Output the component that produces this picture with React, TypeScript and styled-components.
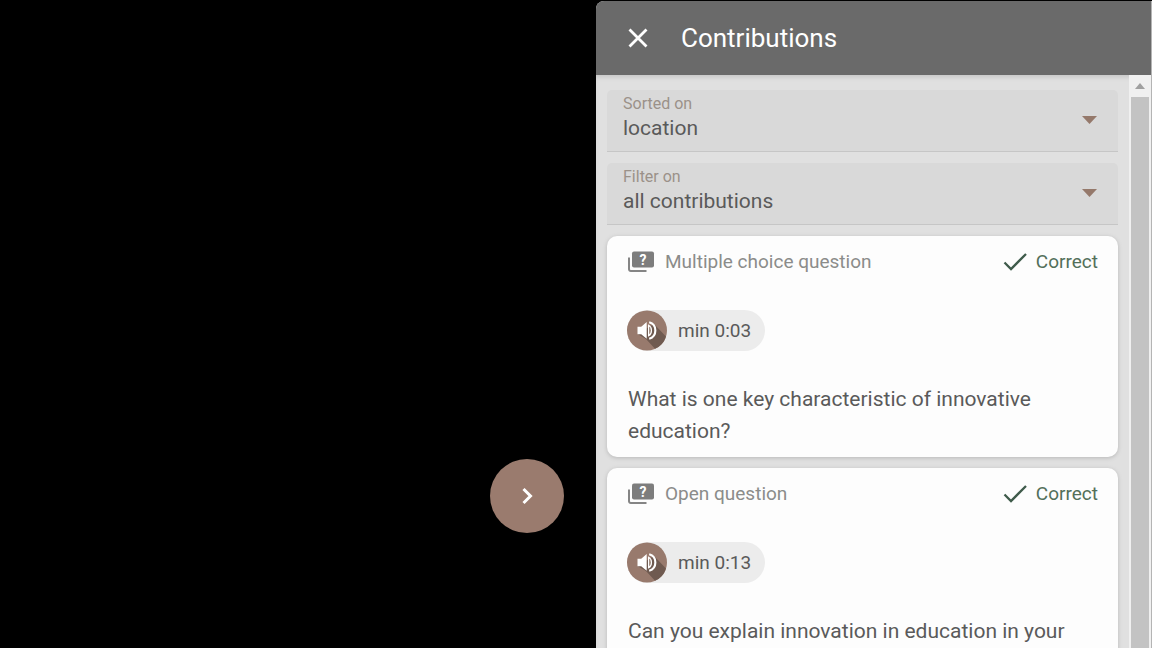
import React, { useId, useState } from "react";
import styled, { createGlobalStyle } from "styled-components";

const GlobalStyle = createGlobalStyle`
  *, *::before, *::after { box-sizing: border-box; }
  body {
    margin: 0;
    background: #000;
    font-family: Roboto, "Liberation Sans", sans-serif;
    color: #5a5a5a;
  }
  button, select { font: inherit; color: inherit; }
`;

const Page = styled.div`
  display: grid;
  grid-template-columns: minmax(0, 149fr) minmax(0, 139fr);
  height: 100vh;
  overflow: hidden;
`;

const Stage = styled.main`
  display: flex;
  justify-content: flex-end;
  align-items: flex-end;
  padding: 0 32px 115px;
  background: #000;
`;

const NextButton = styled.button`
  display: grid;
  place-items: center;
  width: 74px;
  height: 74px;
  padding: 0;
  border: 0;
  border-radius: 50%;
  background: #9a7b6e;
  cursor: pointer;
`;

const Drawer = styled.aside`
  display: flex;
  flex-direction: column;
  min-height: 0;
  margin-top: 1px;
  border-right: 1px solid #b4b4b4;
  border-radius: 8px 0 0 0;
  background: #e0e0e0;
  overflow: hidden;
`;

const DrawerHeader = styled.header`
  display: flex;
  flex: none;
  align-items: center;
  gap: 32px;
  height: 74px;
  padding: 0 31px;
  background: #6a6a6a;
  color: #fff;
`;

const CloseButton = styled.button`
  display: grid;
  place-items: center;
  width: 22px;
  height: 24px;
  padding: 0;
  border: 0;
  background: none;
  cursor: pointer;
`;

const Title = styled.h1`
  margin: 0;
  font-size: 26px;
  font-weight: 400;
  line-height: 32px;
`;

const DrawerBody = styled.div`
  display: flex;
  flex: 1;
  min-height: 0;
  box-shadow: inset 0 4px 5px -2px #c4c4c4;
`;

const List = styled.div`
  display: flex;
  flex: 1;
  flex-direction: column;
  gap: 11px;
  min-width: 0;
  padding: 15px 11px;
  overflow: hidden;
`;

const Scrollbar = styled.div`
  display: flex;
  flex: none;
  flex-direction: column;
  width: 22px;
  padding: 0 2px;
  background: #f0f0f0;
`;

const ScrollUp = styled.button`
  display: grid;
  place-items: center;
  height: 22px;
  padding: 0;
  border: 0;
  background: none;
`;

const ScrollThumb = styled.div`
  flex: 1;
  background: #c3c3c3;
`;

const Field = styled.div`
  position: relative;
  flex: none;
`;

const FieldLabel = styled.label`
  position: absolute;
  top: 4px;
  left: 16px;
  color: #9b9189;
  font-size: 16px;
  line-height: 20px;
`;

const FieldSelect = styled.select`
  display: block;
  width: 100%;
  height: 62px;
  padding: 14px 48px 0 16px;
  border: 0;
  border-bottom: 1px solid #c6c6c6;
  border-radius: 5px 5px 0 0;
  background: #d9d9d9;
  font-size: 21px;
  appearance: none;
`;

const FieldArrow = styled.svg`
  position: absolute;
  top: 26px;
  right: 21px;
  pointer-events: none;
`;

const Card = styled.article`
  flex: none;
  padding: 10px 20px;
  border-radius: 10px;
  background: #fdfdfd;
  box-shadow: 0 1px 4px #b8b8b8;
`;

const CardHeader = styled.div`
  display: flex;
  align-items: center;
  height: 32px;
`;

const Kind = styled.h2`
  flex: 1;
  margin: 0 0 0 10px;
  color: #8b8c8a;
  font-size: 19px;
  font-weight: 400;
  line-height: 32px;
`;

const Status = styled.span`
  display: flex;
  align-items: center;
  gap: 8px;
  color: #53705a;
  font-size: 19px;
  line-height: 32px;
`;

const AudioChip = styled.button`
  display: flex;
  align-items: center;
  gap: 11px;
  height: 41px;
  margin: 32px 0;
  padding: 0 14px 0 0;
  border: 0;
  border-radius: 21px;
  background: #ececec;
  font-size: 19px;
  line-height: 32px;
  cursor: pointer;
`;

const Question = styled.p`
  margin: 0;
  padding-left: 1px;
  font-size: 21px;
  line-height: 32px;
`;

function CloseIcon() {
  return (
    <svg width="22" height="22" viewBox="0 0 22 22" fill="none" stroke="#fff" strokeWidth="2.8" aria-hidden="true">
      <path d="M2.5 2.5 19.5 19.5M19.5 2.5 2.5 19.5" />
    </svg>
  );
}

function NextIcon() {
  return (
    <svg width="16" height="20" viewBox="0 0 16 20" fill="none" stroke="#fff" strokeWidth="3" aria-hidden="true">
      <path d="M4.5 3 11.5 10 4.5 17" />
    </svg>
  );
}

function QuestionIcon() {
  return (
    <svg width="28" height="24" viewBox="0 0 28 24" aria-hidden="true">
      <path d="M2 7.5V19.2a1.8 1.8 0 0 0 1.8 1.8H19.5" fill="none" stroke="#858585" strokeWidth="2" />
      <rect x="5" y="1.5" width="22" height="16" rx="2" fill="#7d7d7d" />
      <text x="16" y="14.5" textAnchor="middle" fontSize="14" fontWeight="700" fill="#fff">?</text>
    </svg>
  );
}

function CheckIcon() {
  return (
    <svg width="25" height="20" viewBox="0 0 25 20" fill="none" stroke="#3f5b4b" strokeWidth="2.3" aria-hidden="true">
      <path d="M1.5 10.5 8 17 23 2" />
    </svg>
  );
}

function SpeakerIcon() {
  return (
    <svg width="40" height="41" viewBox="0 0 40 41" aria-hidden="true">
      <circle cx="20" cy="20.5" r="20" fill="#987a6d" />
      <path d="M10.5 24 19 29 28 38.8A20 20 0 0 0 39 26.5L27 14Z" fill="#6f5a50" />
      <path d="M10.5 16.8H14.2L19.7 12V28.8L14.2 24.2H10.5Z" fill="#fff" />
      <path d="M21.6 15.2C25.4 17 25.4 24 21.6 25.8Z" fill="#8d7568" stroke="#fff" strokeWidth="1.2" />
      <path d="M22.2 12.3C30.4 14.6 30.4 26.4 22.2 28.7" fill="none" stroke="#fff" strokeWidth="2.1" />
    </svg>
  );
}

type SelectFieldProps = { label: string; options: string[] };

function SelectField({ label, options }: SelectFieldProps) {
  const id = useId();
  const [value, setValue] = useState(options[0]);
  return (
    <Field>
      <FieldSelect id={id} value={value} onChange={(e) => setValue(e.target.value)}>
        {options.map((option) => (
          <option key={option}>{option}</option>
        ))}
      </FieldSelect>
      <FieldLabel htmlFor={id}>{label}</FieldLabel>
      <FieldArrow width="15" height="8" viewBox="0 0 15 8" aria-hidden="true">
        <path d="M0 0H15L7.5 8Z" fill="#95796b" />
      </FieldArrow>
    </Field>
  );
}

type Contribution = { kind: string; time: string; question: string };

const contributions: Contribution[] = [
  {
    kind: "Multiple choice question",
    time: "min 0:03",
    question: "What is one key characteristic of innovative education?",
  },
  {
    kind: "Open question",
    time: "min 0:13",
    question: "Can you explain innovation in education in your",
  },
];

function ContributionCard({ kind, time, question }: Contribution) {
  return (
    <Card>
      <CardHeader>
        <QuestionIcon />
        <Kind>{kind}</Kind>
        <Status>
          <CheckIcon />
          Correct
        </Status>
      </CardHeader>
      <AudioChip type="button">
        <SpeakerIcon />
        {time}
      </AudioChip>
      <Question>{question}</Question>
    </Card>
  );
}

export default function App() {
  return (
    <Page>
      <GlobalStyle />
      <Stage>
        <NextButton type="button" aria-label="Next">
          <NextIcon />
        </NextButton>
      </Stage>
      <Drawer>
        <DrawerHeader>
          <CloseButton type="button" aria-label="Close">
            <CloseIcon />
          </CloseButton>
          <Title>Contributions</Title>
        </DrawerHeader>
        <DrawerBody>
          <List>
            <SelectField label="Sorted on" options={["location"]} />
            <SelectField label="Filter on" options={["all contributions"]} />
            {contributions.map((item) => (
              <ContributionCard key={item.time} {...item} />
            ))}
          </List>
          <Scrollbar>
            <ScrollUp type="button" aria-label="Scroll up">
              <svg width="10" height="6" viewBox="0 0 10 6" aria-hidden="true">
                <path d="M0 6 5 0 10 6Z" fill="#a0a0a0" />
              </svg>
            </ScrollUp>
            <ScrollThumb />
          </Scrollbar>
        </DrawerBody>
      </Drawer>
    </Page>
  );
}
